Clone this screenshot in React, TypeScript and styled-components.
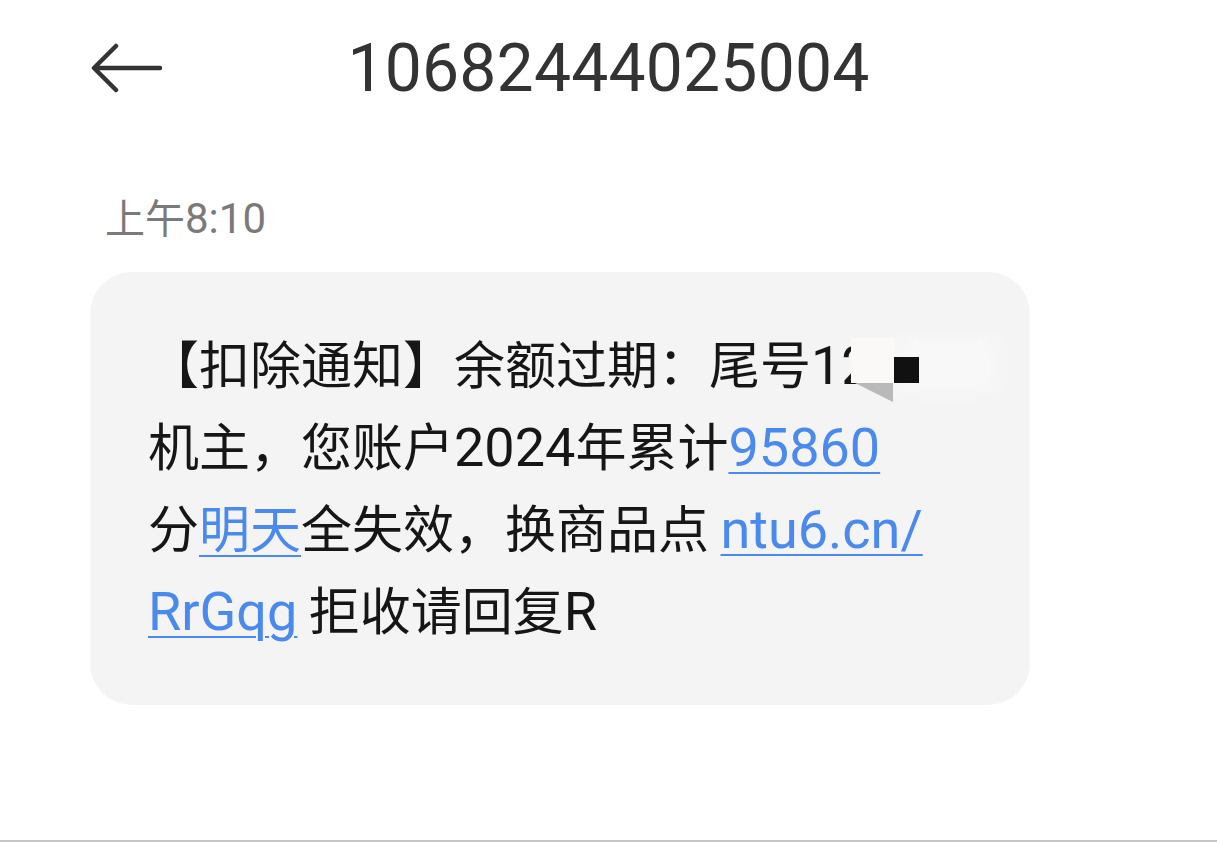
import React from 'react'
import styled, { createGlobalStyle } from 'styled-components'

const GlobalStyle = createGlobalStyle`
  html, body {
    margin: 0;
    padding: 0;
    background: #fff;
  }
  body {
    font-family: Roboto, "Noto Sans CJK SC", sans-serif;
  }
`

const Page = styled.div`
  box-sizing: border-box;
  height: 842px;
  border-bottom: 2px solid #c6c6c6;
  display: flex;
  flex-direction: column;
  overflow: hidden;
`

const Header = styled.div`
  display: grid;
  grid-template-columns: 1fr auto 1fr;
  align-items: center;
  height: 136px;
`

const BackButton = styled.div`
  padding-left: 90px;
  display: flex;
  align-items: center;
  color: #333;
`

const Title = styled.div`
  font-family: Roboto, sans-serif;
  font-size: 66px;
  color: #333;
  letter-spacing: 0.2px;
`

const Conversation = styled.div`
  padding-left: 90px;
  display: flex;
  flex-direction: column;
  align-items: flex-start;
`

const TimeLabel = styled.div`
  margin-top: 56px;
  padding-left: 15px;
  font-size: 40px;
  line-height: 48px;
  color: #7a7a7a;
  font-family: "Noto Sans CJK SC", sans-serif;
`

const Digits = styled.span`
  font-family: Roboto, sans-serif;
  font-size: 42px;
`

const Bubble = styled.div`
  margin-top: 29px;
  box-sizing: border-box;
  width: 940px;
  height: 433px;
  padding: 49px 0 0 58px;
  border-radius: 42px;
  background: #f4f4f4;
  font-family: "Noto Sans CJK SC", sans-serif;
  font-size: 51px;
  color: #161616;
`

const Line = styled.div`
  position: relative;
  height: 82px;
  line-height: 82px;
  white-space: nowrap;
`

const Latin = styled.span`
  font-family: Roboto, sans-serif;
  font-size: 54px;
`

const Link = styled.span<{ $latin?: boolean }>`
  color: #4a89ee;
  text-decoration: underline;
  text-decoration-thickness: 2px;
  text-underline-offset: ${(p) => (p.$latin ? '6px' : '7px')};
  ${(p) => p.$latin && 'font-family: Roboto, sans-serif; font-size: 54px;'}
`

const Redaction = styled.svg`
  position: absolute;
  left: 700px;
  top: 0;
`

const BackArrow = () => (
  <svg width="72" height="50" viewBox="0 0 72 50" fill="none">
    <path
      d="M70 25H5M26 3L4 25l22 22"
      stroke="#333"
      strokeWidth="4.5"
      strokeLinecap="round"
      strokeLinejoin="round"
    />
  </svg>
)

export default function App() {
  return (
    <>
      <GlobalStyle />
      <Page>
        <Header>
          <BackButton>
            <BackArrow />
          </BackButton>
          <Title>10682444025004</Title>
          <div />
        </Header>
        <Conversation>
          <TimeLabel>
            上午<Digits>8:10</Digits>
          </TimeLabel>
          <Bubble>
            <Line>
              【扣除通知】余额过期：尾号<Latin>12</Latin>
              <Redaction width="180" height="82" viewBox="0 0 180 82">
                <defs>
                  <filter id="soft" x="-30%" y="-30%" width="160%" height="160%">
                    <feGaussianBlur stdDeviation="8" />
                  </filter>
                </defs>
                <rect x="50" y="14" width="100" height="60" fill="#f8f8f8" filter="url(#soft)" />
                <rect x="3" y="17" width="44" height="45" fill="#fbf8f8" />
                <polygon points="7,62 45,62 45,81" fill="#b9b9b9" />
                <rect x="46" y="36" width="25" height="26" fill="#111" />
              </Redaction>
            </Line>
            <Line>
              机主，您账户<Latin>2024</Latin>年累计<Link $latin>95860</Link>
            </Line>
            <Line>
              分<Link>明天</Link>全失效，换商品点 <Link $latin>ntu6.cn/</Link>
            </Line>
            <Line>
              <Link $latin>RrGqg</Link> 拒收请回复<Latin>R</Latin>
            </Line>
          </Bubble>
        </Conversation>
      </Page>
    </>
  )
}
